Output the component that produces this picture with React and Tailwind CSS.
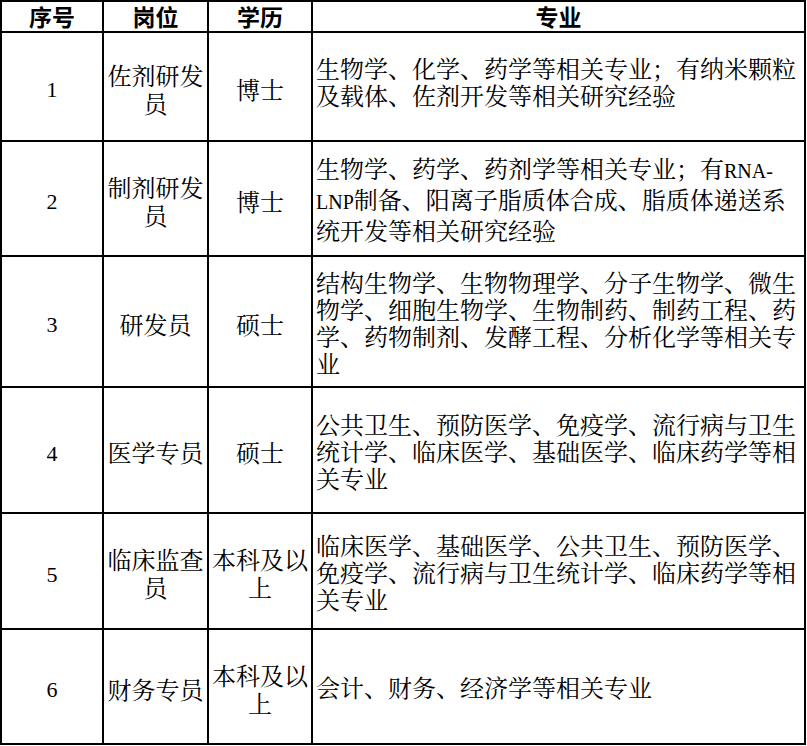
import React from "react";

const cjk = { fontFamily: "'Noto Serif CJK SC', 'Noto Sans CJK SC', serif" };
const head = { fontFamily: "'Noto Sans CJK SC', sans-serif" };
const num = { fontFamily: "'Liberation Serif', serif" };

const L = ({ children }) => (
  <span className="text-[20px]" style={num}>{children}</span>
);

const rows = [
  {
    n: "1",
    h: "h-[109px]",
    pos: ["佐剂研发", "员"],
    edu: ["博士"],
    major: ["生物学、化学、药学等相关专业；有纳米颗粒", "及载体、佐剂开发等相关研究经验"],
    mp: "pb-[12px]",
  },
  {
    n: "2",
    h: "h-[115px]",
    pos: ["制剂研发", "员"],
    edu: ["博士"],
    major: [
      <>生物学、药学、药剂学等相关专业；有<L>RNA-</L></>,
      <><L>LNP</L>制备、阳离子脂质体合成、脂质体递送系</>,
      "统开发等相关研究经验",
    ],
    mp: "",
  },
  {
    n: "3",
    h: "h-[131px]",
    pos: ["研发员"],
    edu: ["硕士"],
    major: [
      "结构生物学、生物物理学、分子生物学、微生",
      "物学、细胞生物学、生物制药、制药工程、药",
      "学、药物制剂、发酵工程、分析化学等相关专",
      "业",
    ],
    mp: "",
  },
  {
    n: "4",
    h: "h-[126px]",
    pos: ["医学专员"],
    edu: ["硕士"],
    major: [
      "公共卫生、预防医学、免疫学、流行病与卫生",
      "统计学、临床医学、基础医学、临床药学等相",
      "关专业",
    ],
    mp: "",
  },
  {
    n: "5",
    h: "h-[116px]",
    pos: ["临床监查", "员"],
    edu: ["本科及以", "上"],
    major: [
      "临床医学、基础医学、公共卫生、预防医学、",
      "免疫学、流行病与卫生统计学、临床药学等相",
      "关专业",
    ],
    mp: "",
  },
  {
    n: "6",
    h: "h-[115px]",
    pos: ["财务专员"],
    edu: ["本科及以", "上"],
    major: ["会计、财务、经济学等相关专业"],
    mp: "",
  },
];

function Lines({ lines }) {
  return lines.map((t, i) => (
    <div key={i} className="whitespace-nowrap">
      {t}
    </div>
  ));
}

export default function App() {
  return (
    <div className="w-[807px] h-[746px] bg-white text-black">
      <div className="w-[806px] border-t-2 border-l-2 border-black">
        <div className="flex h-[31px]" style={head}>
          <div className="w-[102px] border-r-2 border-b-2 border-black flex items-center justify-center text-[23px] font-bold leading-none">
            序号
          </div>
          <div className="w-[105px] border-r-2 border-b-2 border-black flex items-center justify-center text-[23px] font-bold leading-none">
            岗位
          </div>
          <div className="w-[104px] border-r-2 border-b-2 border-black flex items-center justify-center text-[23px] font-bold leading-none">
            学历
          </div>
          <div className="w-[493px] border-r-2 border-b-2 border-black flex items-center justify-center text-[23px] font-bold leading-none">
            专业
          </div>
        </div>
        {rows.map((r) => (
          <div key={r.n} className={`flex ${r.h}`} style={cjk}>
            <div
              className="w-[102px] border-r-2 border-b-2 border-black flex items-center justify-center text-[22px] pt-[6px]"
              style={num}
            >
              {r.n}
            </div>
            <div className="w-[105px] border-r-2 border-b-2 border-black flex flex-col items-center justify-center text-center text-[24px] leading-[28px] pt-[4px]">
              <Lines lines={r.pos} />
            </div>
            <div className="w-[104px] border-r-2 border-b-2 border-black flex flex-col items-center justify-center text-center text-[24px] leading-[28px] pt-[4px]">
              <Lines lines={r.edu} />
            </div>
            <div
              className={`w-[493px] border-r-2 border-b-2 border-black flex flex-col justify-center pl-[3px] text-[24px] leading-[27px] ${r.mp}`}
            >
              <Lines lines={r.major} />
            </div>
          </div>
        ))}
      </div>
    </div>
  );
}
